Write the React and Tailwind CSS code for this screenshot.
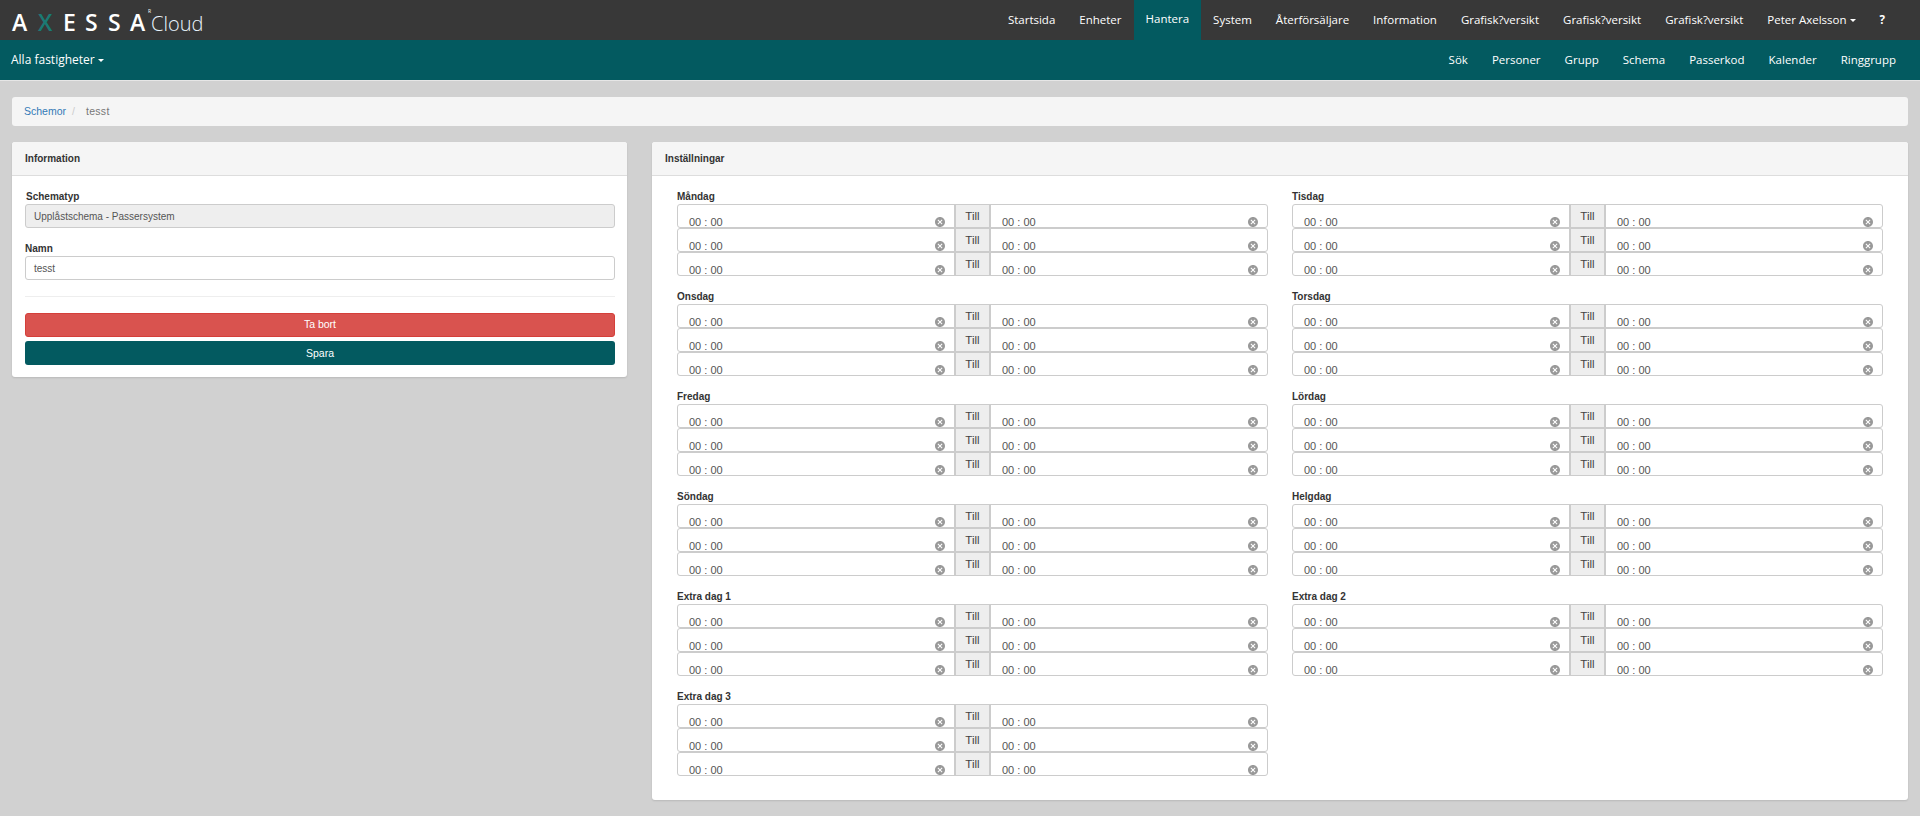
import React from 'react';
import { MdCancel } from 'react-icons/md';

const topLinks = ['Startsida', 'Enheter', 'Hantera', 'System', 'Återförsäljare', 'Information', 'Grafisk?versikt', 'Grafisk?versikt', 'Grafisk?versikt'];
const subLinks = ['Sök', 'Personer', 'Grupp', 'Schema', 'Passerkod', 'Kalender', 'Ringgrupp'];
const days = ['Måndag', 'Tisdag', 'Onsdag', 'Torsdag', 'Fredag', 'Lördag', 'Söndag', 'Helgdag', 'Extra dag 1', 'Extra dag 2', 'Extra dag 3'];

function Caret() {
  return <span className="ml-[3px] inline-block border-x-[3px] border-t-[3px] border-x-transparent border-t-white align-middle" />;
}

function Logo() {
  return (
    <div className="flex h-10 items-start pl-3 font-['Open_Sans',sans-serif] text-white select-none">
      <span className="mt-[6px] flex text-[23px] leading-8 font-semibold">
        <span className="w-[26px]">A</span>
        <span className="w-[25px] text-[#1b7a74]">X</span>
        <span className="w-[22px]">E</span>
        <span className="w-[23px]">S</span>
        <span className="w-[22px]">S</span>
        <span className="w-[18px]">A</span>
      </span>
      <span className="mt-[9px] text-[5px] leading-none">R</span>
      <span className="mt-[12px] text-[20px] leading-6 font-light text-[#eaf6ff]">Cloud</span>
    </div>
  );
}

function TimeInput() {
  return (
    <div className="flex h-full min-w-0 flex-1 items-start justify-between pt-[11px] pr-[8px] pl-[11px]">
      <span className="text-[11px] leading-3 text-[#555]">00 : 00</span>
      <MdCancel className="text-[12px] text-[#999]" />
    </div>
  );
}

function TimeRow() {
  return (
    <div className="flex h-6 rounded-[3px] border border-[#ccc] bg-white">
      <TimeInput />
      <div className="flex w-[37px] shrink-0 justify-center border-x-2 border-[#ccc] bg-[#eee] pt-[4px] text-[11.5px] leading-[14px] text-[#444]">
        Till
      </div>
      <div className="w-[276px] shrink-0">
        <TimeInput />
      </div>
    </div>
  );
}

function Panel({ title, className, children }) {
  return (
    <section className={`rounded-[3px] bg-white shadow-[0_1px_2px_rgba(0,0,0,0.12)] ${className}`}>
      <h2 className="flex h-[34px] items-center rounded-t-[3px] border-b border-[#ddd] bg-[#f5f5f5] px-[13px] text-[10px] font-bold text-[#333]">
        {title}
      </h2>
      {children}
    </section>
  );
}

export default function App() {
  return (
    <div className="min-h-[816px] bg-[#d1d1d1] font-['Liberation_Sans',sans-serif] text-[10px] text-[#333]">
      {/* Top nav */}
      <header className="flex h-10 items-center justify-between bg-[#383838]">
        <Logo />
        <nav className="flex h-full items-stretch pr-[35px] font-['Open_Sans',sans-serif] text-[11.5px] text-white">
          {topLinks.map((link, i) => (
            <a
              key={i}
              className={link === 'Hantera'
                ? 'flex items-center bg-[#035a60] px-3 pb-[3px]'
                : 'flex items-center px-3'}
            >
              {link}
            </a>
          ))}
          <a className="flex items-center px-3">
            Peter Axelsson
            <Caret />
          </a>
          <a className="flex items-center pl-3 font-bold">?</a>
        </nav>
      </header>

      {/* Sub nav */}
      <div className="flex h-10 items-center justify-between bg-[#035a60] pr-6 pl-[11px] font-['Open_Sans',sans-serif] text-[11.5px] text-white">
        <a className="flex items-center text-[12px]">
          Alla fastigheter
          <Caret />
        </a>
        <nav className="flex gap-6">
          {subLinks.map((link) => (
            <a key={link}>{link}</a>
          ))}
        </nav>
      </div>
      <div className="h-px bg-[#e6e6e6]" />

      <main className="px-3 pt-4">
        <div className="flex h-[29px] items-center rounded-[3px] bg-[#f5f5f5] px-3 text-[10.5px]">
          <a className="text-[#337ab7]">Schemor</a>
          <span className="px-[6px] text-[#ccc]">/</span>
          <span className="pl-[5px] tracking-[0.3px] text-[#777]">tesst</span>
        </div>

        <div className="mt-4 flex items-start gap-[25px]">
          <Panel title="Information" className="w-[615px] shrink-0">
            <div className="pt-[14px] pr-3 pb-3 pl-[13px]">
              <label className="block pl-px leading-[14px] font-bold">Schematyp</label>
              <div className="flex h-6 items-center rounded-[3px] border border-[#ccc] bg-[#eee] px-2 text-[#555]">
                Upplåstschema - Passersystem
              </div>
              <label className="mt-[14px] block leading-[14px] font-bold">Namn</label>
              <div className="flex h-6 items-center rounded-[3px] border border-[#ccc] bg-white px-2 text-[#555]">
                tesst
              </div>
              <hr className="mt-4 mb-4 border-[#eee]" />
              <button className="block h-6 w-full rounded-[3px] border border-[#d43f3a] bg-[#d9534f] text-[10.5px] text-white">
                Ta bort
              </button>
              <button className="mt-1 block h-6 w-full rounded-[3px] bg-[#035a60] pt-px text-[10.5px] text-white">
                Spara
              </button>
            </div>
          </Panel>

          <Panel title="Inställningar" className="min-w-0 flex-1">
            <div className="grid grid-cols-2 gap-x-6 px-[25px] pt-[13px] pb-6">
              {days.map((day) => (
                <div key={day} className="h-[100px] last:h-[87px]">
                  <label className="block text-[10px] leading-[15px] font-bold">{day}</label>
                  <TimeRow />
                  <TimeRow />
                  <TimeRow />
                </div>
              ))}
            </div>
          </Panel>
        </div>
      </main>
    </div>
  );
}
